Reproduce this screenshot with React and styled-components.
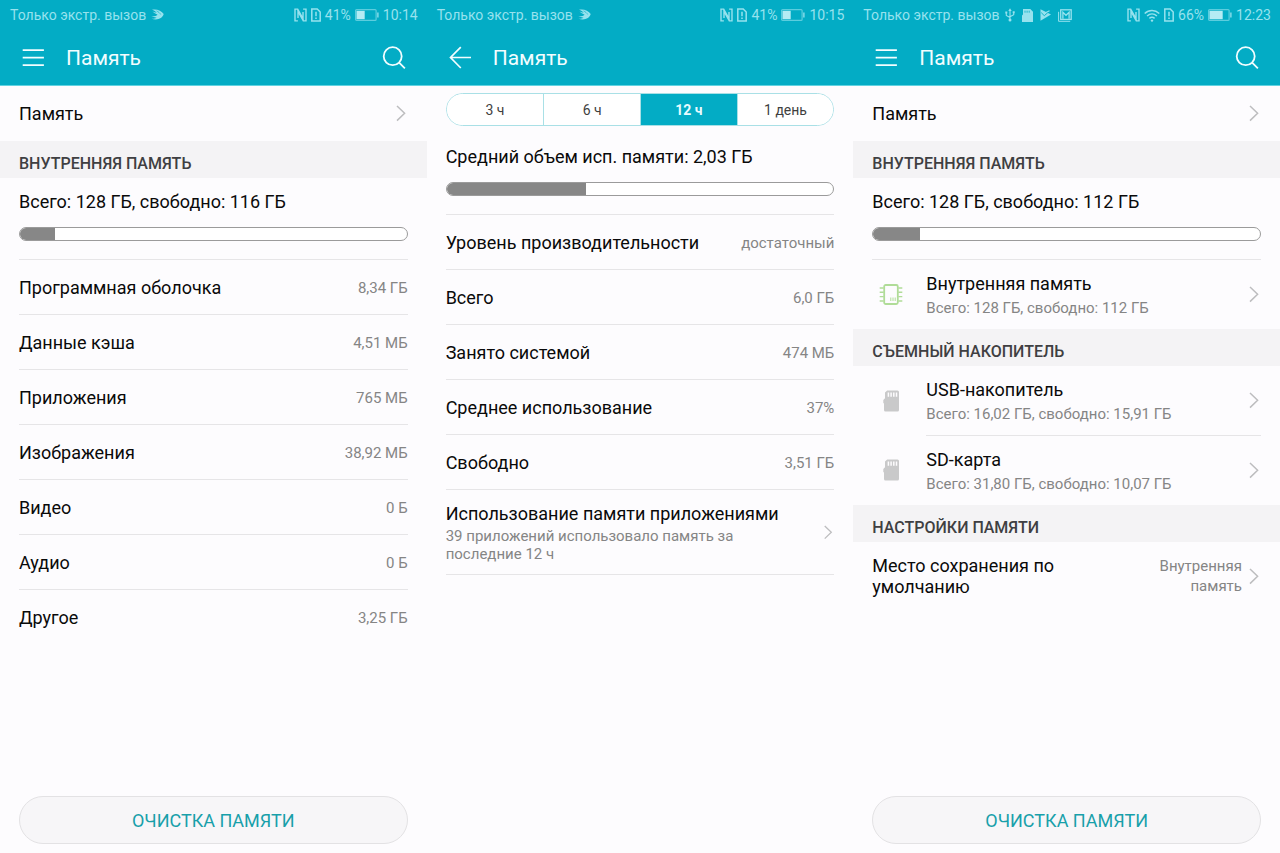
import React, { useState } from 'react';
import styled, { createGlobalStyle } from 'styled-components';

const GlobalStyle = createGlobalStyle`
	* {
		box-sizing: border-box;
	}
	body {
		margin: 0;
		background: #fdfcfe;
		color: #0a0a0a;
		font-family: Roboto, 'Liberation Sans', sans-serif;
		font-size: 18px;
		line-height: 24px;
	}
	button {
		font: inherit;
		cursor: pointer;
	}
`;

const Screens = styled.div`
	display: grid;
	grid-template-columns: repeat(3, 1fr);
	min-height: 100vh;
`;

const Screen = styled.section`
	display: flex;
	flex-direction: column;
	min-width: 0;
`;

const Header = styled.header`
	background: #03acc5;
	border-bottom: 1px solid #62d3e1;
	color: #f2fdff;
`;

const StatusBar = styled.div`
	display: flex;
	align-items: center;
	justify-content: space-between;
	height: 30px;
	padding: 0 9px 0 10px;
	color: #97e2ee;
	font-size: 14px;
`;

const StatusGroup = styled.div`
	display: flex;
	align-items: center;
	gap: 4px;
`;

const Notices = styled.div`
	display: flex;
	align-items: center;
	gap: 7px;
	margin-left: 1px;
`;

const Toolbar = styled.div`
	display: flex;
	align-items: center;
	height: 55px;
	padding: 0 21px;
`;

const Title = styled.h1`
	flex: 1;
	margin: 0 0 0 21px;
	padding-top: 1px;
	font-size: 21px;
	font-weight: 400;
`;

const IconButton = styled.button`
	display: flex;
	padding: 0;
	border: 0;
	background: none;
	color: inherit;
`;

const LinkRow = styled.a`
	display: flex;
	align-items: center;
	justify-content: space-between;
	gap: 8px;
	min-height: 55px;
	padding: 0 19px;
	color: inherit;
	text-decoration: none;
`;

const SectionTitle = styled.h2`
	margin: 0;
	padding: 12px 19px 3px;
	background: #f4f3f5;
	color: #3f3f42;
	font-size: 16px;
	font-weight: 500;
	line-height: 22px;
`;

const Summary = styled.div`
	display: flex;
	flex-direction: column;
	gap: 13px;
	padding: ${({ $top }) => $top}px 19px 18px;
`;

const Track = styled.div`
	height: 14px;
	overflow: hidden;
	border: 1px solid #9b9b9b;
	border-radius: 7px;
	background: #fff;
`;

const Fill = styled.div`
	height: 100%;
	background: #878787;
`;

const Values = styled.dl`
	margin: 0 19px;
`;

const ValueRow = styled.div`
	display: flex;
	align-items: center;
	justify-content: space-between;
	height: 55px;
	padding-top: 1px;
	border-top: 1px solid #e6e5e7;
`;

const Value = styled.dd`
	margin: 0;
	color: #858585;
	font-size: 15px;
`;

const Tabs = styled.div`
	display: grid;
	grid-template-columns: repeat(4, 1fr);
	height: 33px;
	margin: 7px 19px 0;
	overflow: hidden;
	border: 1px solid #a9e0e6;
	border-radius: 17px;
`;

const Tab = styled.button`
	padding: 0;
	border: 0;
	border-left: 1px solid #a9e0e6;
	background: ${({ $active }) => ($active ? '#03acc5' : '#fff')};
	color: ${({ $active }) => ($active ? '#e8fbff' : '#3f3f3f')};
	font-size: 14px;
	font-weight: ${({ $active }) => ($active ? 700 : 400)};
	&:first-child {
		border-left: 0;
	}
`;

const AppsRow = styled.a`
	display: flex;
	align-items: center;
	justify-content: space-between;
	gap: 32px;
	margin: 0 19px;
	padding: 12px 0 11px;
	border-top: 1px solid #e6e5e7;
	border-bottom: 1px solid #e6e5e7;
	color: inherit;
	text-decoration: none;
`;

const Note = styled.div`
	margin-top: 1px;
	color: #858585;
	font-size: 15px;
	line-height: 18px;
`;

const StorageRow = styled.a`
	display: flex;
	gap: 16px;
	margin: 0 19px;
	color: inherit;
	text-decoration: none;
`;

const StorageIcon = styled.span`
	display: flex;
	align-items: center;
	justify-content: center;
	width: 38px;
`;

const StorageBody = styled.span`
	display: flex;
	flex: 1;
	align-items: center;
	justify-content: space-between;
	border-top: ${({ $line }) => ($line ? '1px solid #e6e5e7' : '0')};
`;

const StorageText = styled.span`
	display: flex;
	flex-direction: column;
	padding: 12px 0 9px;
	small {
		color: #858585;
		font-size: 15px;
	}
`;

const Divider = styled.div`
	height: 1px;
	margin: 0 19px;
	background: #e6e5e7;
`;

const DefaultPlace = styled.a`
	display: flex;
	align-items: center;
	gap: 6px;
	padding: 13px 19px;
	color: inherit;
	line-height: 21px;
	text-decoration: none;
`;

const PlaceLabel = styled.span`
	flex: 1;
	max-width: 220px;
`;

const PlaceValue = styled.span`
	width: 100px;
	margin-left: auto;
	color: #858585;
	font-size: 15px;
	line-height: 20px;
	text-align: right;
`;

const CleanButton = styled.button`
	height: 48px;
	margin: auto 19px 9px;
	padding: 2px 0 0;
	border: 1px solid #e3e2e4;
	border-radius: 24px;
	background: #f7f6f8;
	color: #18a0aa;
`;

const MenuIcon = () => (
	<svg width="24" height="24" viewBox="0 0 24 24" fill="none" stroke="currentColor" strokeWidth="1.7">
		<path d="M1.7 4.2h21.2M1.7 11.7h21.2M1.7 19.2h21.2" />
	</svg>
);

const BackIcon = () => (
	<svg width="24" height="24" viewBox="0 0 24 24" fill="none" stroke="currentColor" strokeWidth="1.7">
		<path d="M23 11.500H2.700M12.800 1.200 2.500 11.500 12.800 22" />
	</svg>
);

const SearchIcon = () => (
	<svg width="24" height="24" viewBox="0 0 24 24" fill="none" stroke="currentColor" strokeWidth="1.8">
		<circle cx="10.700" cy="10.200" r="9" />
		<path d="m17.100 16.700 5.800 5.700" />
	</svg>
);

const Chevron = () => (
	<svg width="13" height="17" viewBox="0 0 13 17" fill="none" stroke="#bdbdbf" strokeWidth="1.5">
		<path d="m2 1 7.600 7.300L2 15.600" />
	</svg>
);

const SwiftIcon = () => (
	<svg width="13" height="12" viewBox="0 0 13 12" fill="currentColor">
		<path d="M1 .8C5.500-.2 10.500 1.500 12.700 5.100c-1.300 4.400-6.200 6.600-12.200 4.700 2.100.1 3.700-.3 5-1L.2 7.300c3 .2 5-.4 6.400-1.600C5 4.900 2.500 3.600 1.400 2.600c1.600.6 3 .9 4.200 1.200C4.600 2.500 3 1.500 1 .8Z" />
		<path d="M5.500 1.900c2 .9 3.300 2 4.200 3.600" fill="none" stroke="#03acc5" strokeWidth=".6" />
	</svg>
);

const NfcIcon = () => (
	<svg width="13" height="14" viewBox="0 0 13 14" fill="none" stroke="currentColor">
		<path d="M3.900 12.900H1V1.100h2.700L9 10.500V4" strokeWidth="1.400" />
		<path d="M9.100 1.100H12v11.800H9.300L4 3.500V10" strokeWidth="1.400" />
	</svg>
);

const SimIcon = () => (
	<svg width="10" height="14" viewBox="0 0 10 14" fill="none" stroke="currentColor" strokeWidth="1.500">
		<path d="M.8 1h5.400l3 3v9H.8Z" />
		<path d="M5 3.800v4.400M5 9.500v1.500" strokeWidth="1.500" />
	</svg>
);

const BatteryIcon = ({ level }) => (
	<svg width="24" height="12" viewBox="0 0 24 12">
		<rect x=".6" y=".6" width="20.500" height="10.800" rx="1" fill="none" stroke="currentColor" strokeWidth="1.200" opacity=".6" />
		<rect x="1.500" y="1.800" width={(20 * level) / 100} height="8.400" fill="#b4ecf4" />
		<path d="M22.900 3.500v5" stroke="currentColor" strokeWidth="1.300" />
	</svg>
);

const WifiIcon = () => (
	<svg width="16" height="13" viewBox="0 0 16 13" fill="none" stroke="currentColor" strokeWidth="1.500">
		<path d="M.7 4.500c4.200-4 10.400-4 14.600 0M3.100 7c2.900-2.700 6.900-2.700 9.800 0M5.400 9.400c1.600-1.400 3.600-1.400 5.200 0" />
		<circle cx="8" cy="11.600" r="1.200" fill="currentColor" stroke="none" />
	</svg>
);

const UsbIcon = () => (
	<svg width="10" height="14" viewBox="0 0 10 14" fill="none" stroke="currentColor" strokeWidth="1.100">
		<path d="M5 2v9.500M1.300 4.800v2.700L5 9.600M8.700 4.400v2.300L5 8.700" />
		<path d="M5 .3 6.700 3H3.300ZM.3 3.600h2v2h-2ZM7.700 3.300h2v2h-2Z" fill="currentColor" stroke="none" />
		<circle cx="5" cy="12" r="1.500" fill="currentColor" stroke="none" />
	</svg>
);

const CardStatusIcon = () => (
	<svg width="11" height="13" viewBox="0 0 11 13">
		<path d="M1 0h7.300L11 2.700V13H0V6.500l1-1Z" fill="currentColor" />
		<path d="M3 1.700v2M5.100 1.700v2M7.200 1.700v2" stroke="#03acc5" strokeWidth=".8" />
	</svg>
);

const PlayIcon = () => (
	<svg width="11" height="12" viewBox="0 0 11 12">
		<path d="M.5.300 11 5.600.5 11.700Z" fill="currentColor" />
		<path d="m1.200 3.600 3.100 3.100L9 2.500" fill="none" stroke="#03acc5" strokeWidth=".9" />
		<path d="m5 4 4.500-2.300" stroke="currentColor" strokeWidth="1.200" />
	</svg>
);

const MailIcon = () => (
	<svg width="14" height="13" viewBox="0 0 14 13" fill="none" stroke="currentColor">
		<path d="M.6 2.800v9.500h11.600" strokeWidth="1" />
		<rect x="2.700" y=".8" width="10.500" height="9.600" strokeWidth="1.300" />
		<path d="M4.900 9.800V3.200L8 6.300l3.100-3.100v6.600" strokeWidth="1.300" />
	</svg>
);

const ChipIcon = () => (
	<svg width="24" height="22" viewBox="0 0 24 22" fill="none" stroke="#b0dc98">
		<rect x="5.200" y="1" width="13.600" height="19" rx="1.500" strokeWidth="1.800" />
		<path d="M.7 4h4M.7 8.300h4M.7 12.600h4M.7 17h4M19.300 4h4M19.300 8.300h4M19.300 12.600h4M19.300 17h4" strokeWidth="1.400" />
		<path d="M11.800 13.500V17M14 13.500V17M16.200 13.500V17" strokeWidth="1" />
	</svg>
);

const CardIcon = () => (
	<svg width="18" height="22" viewBox="0 0 18 22">
		<path d="M5.200.6h10.300A1.500 1.500 0 0 1 17 2.100v17.800a1.500 1.500 0 0 1-1.500 1.500h-12A1.500 1.500 0 0 1 2 19.900v-6.300l-.7-.6v-3l1.700-1.700V2.600Z" fill="#c9c9ca" />
		<path d="M6.400 2.400v4.400M9.100 2.400v4.400M11.800 2.400v4.400M14.500 2.400v4.400" stroke="#fdfcfe" strokeWidth="1.500" />
	</svg>
);

const ScreenHeader = ({ time, battery, back, notices, wifi }) => (
	<Header>
		<StatusBar>
			<StatusGroup>
				<span>Только экстр. вызов</span>
				<Notices>{notices}</Notices>
			</StatusGroup>
			<StatusGroup>
				<NfcIcon />
				{wifi && <WifiIcon />}
				<SimIcon />
				<span>{battery}%</span>
				<BatteryIcon level={battery} />
				<span>{time}</span>
			</StatusGroup>
		</StatusBar>
		<Toolbar>
			<IconButton aria-label={back ? 'Назад' : 'Меню'}>{back ? <BackIcon /> : <MenuIcon />}</IconButton>
			<Title>Память</Title>
			{!back && (
				<IconButton aria-label="Поиск">
					<SearchIcon />
				</IconButton>
			)}
		</Toolbar>
	</Header>
);

const Usage = ({ text, percent, top = 12 }) => (
	<Summary $top={top}>
		<span>{text}</span>
		<Track role="progressbar" aria-label={text} aria-valuenow={percent} aria-valuemin={0} aria-valuemax={100}>
			<Fill style={{ width: `${percent}%` }} />
		</Track>
	</Summary>
);

const ValueList = ({ items }) => (
	<Values>
		{items.map(([label, value]) => (
			<ValueRow key={label}>
				<dt>{label}</dt>
				<Value>{value}</Value>
			</ValueRow>
		))}
	</Values>
);

const Storage = ({ icon, title, text, line }) => (
	<StorageRow href="#">
		<StorageIcon>{icon}</StorageIcon>
		<StorageBody $line={line}>
			<StorageText>
				{title}
				<small>{text}</small>
			</StorageText>
			<Chevron />
		</StorageBody>
	</StorageRow>
);

const storageItems = [
	['Программная оболочка', '8,34 ГБ'],
	['Данные кэша', '4,51 МБ'],
	['Приложения', '765 МБ'],
	['Изображения', '38,92 МБ'],
	['Видео', '0 Б'],
	['Аудио', '0 Б'],
	['Другое', '3,25 ГБ'],
];

const memoryItems = [
	['Уровень производительности', 'достаточный'],
	['Всего', '6,0 ГБ'],
	['Занято системой', '474 МБ'],
	['Среднее использование', '37%'],
	['Свободно', '3,51 ГБ'],
];

const periods = ['3 ч', '6 ч', '12 ч', '1 день'];

const App = () => {
	const [period, setPeriod] = useState('12 ч');

	return (
		<>
			<GlobalStyle />
			<Screens>
				<Screen>
					<ScreenHeader time="10:14" battery={41} notices={<SwiftIcon />} />
					<LinkRow href="#">
						Память
						<Chevron />
					</LinkRow>
					<SectionTitle>ВНУТРЕННЯЯ ПАМЯТЬ</SectionTitle>
					<Usage text="Всего: 128 ГБ, свободно: 116 ГБ" percent={9} />
					<ValueList items={storageItems} />
					<CleanButton>ОЧИСТКА ПАМЯТИ</CleanButton>
				</Screen>

				<Screen>
					<ScreenHeader time="10:15" battery={41} back notices={<SwiftIcon />} />
					<Tabs>
						{periods.map((name) => (
							<Tab key={name} $active={name === period} aria-pressed={name === period} onClick={() => setPeriod(name)}>
								{name}
							</Tab>
						))}
					</Tabs>
					<Usage text="Средний объем исп. памяти: 2,03 ГБ" percent={36} top={19} />
					<ValueList items={memoryItems} />
					<AppsRow href="#">
						<div>
							Использование памяти приложениями
							<Note>39 приложений использовало память за последние 12 ч</Note>
						</div>
						<Chevron />
					</AppsRow>
				</Screen>

				<Screen>
					<ScreenHeader
						time="12:23"
						battery={66}
						wifi
						notices={
							<>
								<UsbIcon />
								<CardStatusIcon />
								<PlayIcon />
								<MailIcon />
							</>
						}
					/>
					<LinkRow href="#">
						Память
						<Chevron />
					</LinkRow>
					<SectionTitle>ВНУТРЕННЯЯ ПАМЯТЬ</SectionTitle>
					<Usage text="Всего: 128 ГБ, свободно: 112 ГБ" percent={12} />
					<Divider />
					<Storage icon={<ChipIcon />} title="Внутренняя память" text="Всего: 128 ГБ, свободно: 112 ГБ" />
					<SectionTitle>СЪЕМНЫЙ НАКОПИТЕЛЬ</SectionTitle>
					<Storage icon={<CardIcon />} title="USB-накопитель" text="Всего: 16,02 ГБ, свободно: 15,91 ГБ" />
					<Storage icon={<CardIcon />} title="SD-карта" text="Всего: 31,80 ГБ, свободно: 10,07 ГБ" line />
					<SectionTitle>НАСТРОЙКИ ПАМЯТИ</SectionTitle>
					<DefaultPlace href="#">
						<PlaceLabel>Место сохранения по умолчанию</PlaceLabel>
						<PlaceValue>Внутренняя память</PlaceValue>
						<Chevron />
					</DefaultPlace>
					<CleanButton>ОЧИСТКА ПАМЯТИ</CleanButton>
				</Screen>
			</Screens>
		</>
	);
};

export default App;
